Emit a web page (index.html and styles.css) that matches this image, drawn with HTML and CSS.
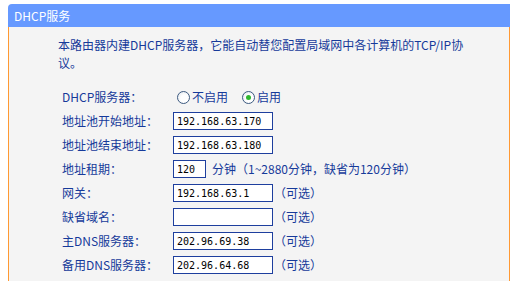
FILE: index.html
```html
<!DOCTYPE html>
<html lang="zh-CN">
<head>
    <meta charset="UTF-8">
    <title>DHCP服务</title>
    <link rel="stylesheet" href="styles.css">
</head>
<body>
    <div class="panel">
        <div class="panel-title">DHCP服务</div>
        <div class="panel-body">
            <p class="intro">本路由器内建DHCP服务器，它能自动替您配置局域网中各计算机的TCP/IP协<br>议。</p>

            <div class="form">
                <div class="row">
                    <label class="label">DHCP服务器：</label>
                    <div class="field">
                        <label class="radio"><input type="radio" name="dhcp"><span>不启用</span></label>
                        <label class="radio"><input type="radio" name="dhcp" checked><span>启用</span></label>
                    </div>
                </div>
                <div class="row">
                    <label class="label">地址池开始地址：</label>
                    <div class="field"><input class="text" type="text" value="192.168.63.170"></div>
                </div>
                <div class="row">
                    <label class="label">地址池结束地址：</label>
                    <div class="field"><input class="text" type="text" value="192.168.63.180"></div>
                </div>
                <div class="row">
                    <label class="label">地址租期：</label>
                    <div class="field"><input class="text short" type="text" value="120"><span class="hint spaced">分钟（1~2880分钟，缺省为120分钟）</span></div>
                </div>
                <div class="row">
                    <label class="label">网关：</label>
                    <div class="field"><input class="text" type="text" value="192.168.63.1"><span class="hint">（可选）</span></div>
                </div>
                <div class="row">
                    <label class="label">缺省域名：</label>
                    <div class="field"><input class="text" type="text" value=""><span class="hint">（可选）</span></div>
                </div>
                <div class="row">
                    <label class="label">主DNS服务器：</label>
                    <div class="field"><input class="text" type="text" value="202.96.69.38"><span class="hint">（可选）</span></div>
                </div>
                <div class="row">
                    <label class="label">备用DNS服务器：</label>
                    <div class="field"><input class="text" type="text" value="202.96.64.68"><span class="hint">（可选）</span></div>
                </div>
            </div>
        </div>
    </div>
</body>
</html>
```

FILE: styles.css
```css
* {
    margin: 0;
    padding: 0;
    box-sizing: border-box;
}

html, body {
    height: 100%;
    overflow: hidden;
}

body {
    padding: 4px 9px 0 8px;
    background: #fff;
    font-family: "Noto Sans CJK SC", sans-serif;
    font-size: 12px;
    line-height: 18px;
    color: #163a9a;
}

.panel {
    height: 100%;
    display: flex;
    flex-direction: column;
}

.panel-title {
    height: 23px;
    flex-shrink: 0;
    line-height: 23px;
    padding-left: 6px;
    background: #6699ff;
    color: #fff;
    border-top-left-radius: 4px;
}

.panel-body {
    flex: 1;
    background: #f4f4f4;
    border-left: 1px solid #ff9933;
    border-right: 1px solid #ff9933;
    padding: 9px 0 0 49px;
}

.intro {
    width: 410px;
}

/* form rows */
.form {
    margin-top: 13px;
    padding-left: 4px;
}

.row {
    display: grid;
    grid-template-columns: 111px auto;
    align-items: center;
    height: 24px;
}

.field {
    display: flex;
    align-items: center;
}

.text {
    width: 100px;
    height: 18px;
    border: 1px solid #1e3f9e;
    background: #fff;
    padding: 0 3px;
    font-family: "DejaVu Sans Mono", monospace;
    font-size: 10px;
    color: #000;
    outline: none;
}

.text.short {
    width: 33px;
}

.hint {
    margin-left: 1px;
}

.hint.spaced {
    margin-left: 6px;
}

.radio {
    display: flex;
    align-items: center;
    margin-right: 10px;
}

.radio input {
    appearance: none;
    width: 13px;
    height: 13px;
    margin: 0 2px 0 4px;
    border: 1px solid #3d5a80;
    border-radius: 50%;
    background: radial-gradient(circle at 60% 60%, #fff 40%, #dde3ea 100%);
    display: grid;
    place-items: center;
}

.radio input:checked::after {
    content: "";
    width: 5px;
    height: 5px;
    border-radius: 50%;
    background: #2fb82f;
}
```
